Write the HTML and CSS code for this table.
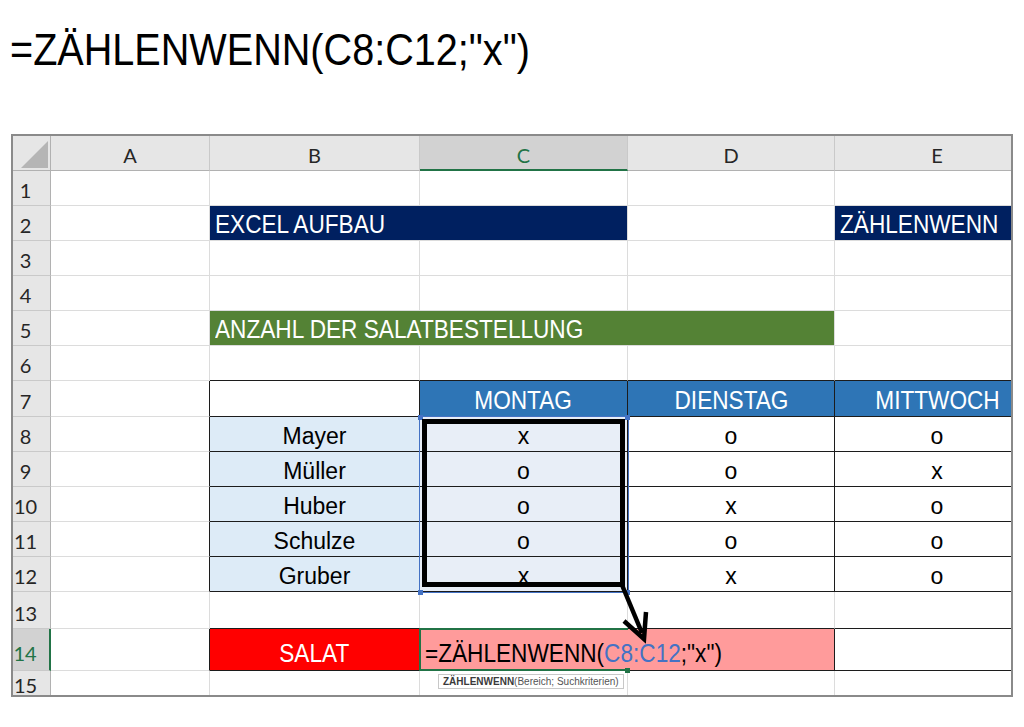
FILE: index.html
```html
<!DOCTYPE html>
<html lang="de">
<head>
<meta charset="utf-8">
<title>ZÄHLENWENN</title>
<link rel="stylesheet" href="styles.css">
</head>
<body>
<h1 class="title"><span>=ZÄHLENWENN(C8:C12;"x")</span></h1>

<div class="sheet">
  <div class="corner"></div>
  <div class="ch">A</div>
  <div class="ch">B</div>
  <div class="ch on">C</div>
  <div class="ch">D</div>
  <div class="ch">E</div>

  <!-- 1 -->
  <div class="rh">1</div><div class="c"></div><div class="c"></div><div class="c"></div><div class="c"></div><div class="c"></div>
  <!-- 2 -->
  <div class="rh">2</div><div class="c"></div>
  <div class="c navy lf span2"><span class="nw">EXCEL AUFBAU</span></div>
  <div class="c"></div>
  <div class="c navy lf"><span class="nw">ZÄHLENWENN</span></div>
  <!-- 3 -->
  <div class="rh">3</div><div class="c"></div><div class="c"></div><div class="c"></div><div class="c"></div><div class="c"></div>
  <!-- 4 -->
  <div class="rh">4</div><div class="c"></div><div class="c"></div><div class="c"></div><div class="c"></div><div class="c"></div>
  <!-- 5 -->
  <div class="rh">5</div><div class="c"></div>
  <div class="c green lf span3"><span class="nw">ANZAHL DER SALATBESTELLUNG</span></div>
  <div class="c"></div>
  <!-- 6 -->
  <div class="rh">6</div><div class="c"></div><div class="c kb"></div><div class="c kb"></div><div class="c kb"></div><div class="c kb"></div>
  <!-- 7 -->
  <div class="rh">7</div><div class="c kr"></div>
  <div class="c k"></div>
  <div class="c k blue ctr"><span class="nw">MONTAG</span></div>
  <div class="c k blue ctr"><span class="nw">DIENSTAG</span></div>
  <div class="c k blue ctr"><span class="nw">MITTWOCH</span></div>
  <!-- 8 -->
  <div class="rh">8</div><div class="c kr"></div>
  <div class="c k name ctr">Mayer</div><div class="c k sel ctr">x</div><div class="c k ctr">o</div><div class="c k ctr">o</div>
  <!-- 9 -->
  <div class="rh">9</div><div class="c kr"></div>
  <div class="c k name ctr">Müller</div><div class="c k sel ctr">o</div><div class="c k ctr">o</div><div class="c k ctr">x</div>
  <!-- 10 -->
  <div class="rh">10</div><div class="c kr"></div>
  <div class="c k name ctr">Huber</div><div class="c k sel ctr">o</div><div class="c k ctr">x</div><div class="c k ctr">o</div>
  <!-- 11 -->
  <div class="rh">11</div><div class="c kr"></div>
  <div class="c k name ctr">Schulze</div><div class="c k sel ctr">o</div><div class="c k ctr">o</div><div class="c k ctr">o</div>
  <!-- 12 -->
  <div class="rh">12</div><div class="c kr"></div>
  <div class="c k name ctr">Gruber</div><div class="c k sel ctr">x</div><div class="c k ctr">x</div><div class="c k ctr">o</div>
  <!-- 13 -->
  <div class="rh">13</div><div class="c"></div><div class="c kb"></div><div class="c kb"></div><div class="c kb"></div><div class="c kb"></div>
  <!-- 14 -->
  <div class="rh on">14</div><div class="c kr"></div>
  <div class="c k red ctr low"><span class="nw">SALAT</span></div>
  <div class="c k pink lf low span2"><span class="nw">=ZÄHLENWENN(<span class="ref">C8:C12</span>;"x")</span></div>
  <div class="c kb"></div>
  <!-- 15 -->
  <div class="rh">15</div><div class="c"></div><div class="c"></div><div class="c"></div><div class="c"></div><div class="c"></div>

  <!-- selection of the referenced range -->
  <div class="selbox"></div>
  <div class="hd" style="left:405px;top:279px"></div>
  <div class="hd" style="left:612px;top:279px"></div>
  <div class="hd" style="left:405px;top:454px"></div>
  <div class="hd" style="left:612px;top:454px"></div>

  <div class="mark"></div>
  <div class="active"></div>
  <div class="fill"></div>

  <svg class="arrow" width="998" height="559" viewBox="0 0 998 559">
    <line x1="609" y1="449" x2="629" y2="497" stroke="#000" stroke-width="4.5"/>
    <polyline points="611,485 631,503 633,476" fill="none" stroke="#000" stroke-width="4.5" stroke-linejoin="miter"/>
  </svg>

  <div class="tip"><b>ZÄHLENWENN</b>(Bereich; Suchkriterien)</div>
</div>
</body>
</html>
```

FILE: styles.css
```css
body {
  margin: 0;
  background: #fff;
  font-family: "Liberation Sans", Arial, sans-serif;
  color: #000;
}

.title {
  margin: 28px 0 0 10px;
  font-size: 44px;
  line-height: 44px;
  font-weight: normal;
}
.title span {
  display: inline-block;
  transform: scaleX(.9);
  transform-origin: left center;
  white-space: nowrap;
}

.sheet {
  position: relative;
  margin: 62px 0 0 11px;
  width: 998px;
  height: 559px;
  border: 2px solid #8a8a8a;
  overflow: hidden;
  display: grid;
  grid-template-columns: 38px 159px 210px 208px 207px 205px;
  grid-template-rows: 35px repeat(6, 35px) 36px repeat(5, 35px) 37px 42px 30px;
}

/* headers */
.corner {
  position: relative;
  background: #e6e6e6;
  border-right: 1px solid #b1b1b1;
  border-bottom: 1px solid #b1b1b1;
}
.corner::after {
  content: "";
  position: absolute;
  left: 8px;
  top: 5px;
  width: 27px;
  height: 27px;
  background: #b5b5b5;
  clip-path: polygon(100% 0, 100% 100%, 0 100%);
}
.ch, .rh {
  box-sizing: border-box;
  display: flex;
  justify-content: center;
  align-items: flex-end;
  background: #e6e6e6;
  font-family: Lato, "Open Sans", sans-serif;
  font-size: 20px;
  line-height: 1;
  color: #262626;
}
.ch {
  border-right: 1px solid #c9c9c9;
  border-bottom: 1px solid #b1b1b1;
  padding-bottom: 5px;
}
.rh {
  border-right: 1px solid #b1b1b1;
  border-bottom: 1px solid #c9c9c9;
  padding: 0 12px 5px 0;
}
.ch.on {
  background: #d2d2d2;
  color: #217346;
  border-bottom: 2px solid #217346;
  padding-bottom: 4px;
}
.rh.on {
  background: #d2d2d2;
  color: #217346;
  border-right: 2px solid #217346;
  padding-bottom: 7px;
}

/* cells */
.c {
  box-sizing: border-box;
  display: flex;
  align-items: flex-end;
  padding-bottom: 3px;
  border-right: 1px solid #dcdcdc;
  border-bottom: 1px solid #dcdcdc;
  font-size: 23px;
  line-height: 1;
  white-space: nowrap;
}
.c.low { padding-bottom: 4px; }
.ctr { justify-content: center; }
.lf { padding-left: 5px; }
.span2 { grid-column: span 2; }
.span3 { grid-column: span 3; }

.k { border-right-color: #1c1c1c; border-bottom-color: #1c1c1c; }
.kb { border-bottom-color: #1c1c1c; }
.kr { border-right-color: #1c1c1c; }

.nw {
  display: inline-block;
  font-size: 26px;
  line-height: 1;
  transform: scaleX(.87);
  transform-origin: left bottom;
}
.ctr .nw { transform-origin: center bottom; }

.navy { background: #002060; color: #fff; }
.green { background: #548235; color: #fff; }
.blue { background: #2e75b6; color: #fff; }
.name { background: #ddebf7; }
.sel { background: #e8eef7; }
.red { background: #ff0000; color: #fff; }
.pink { background: #ff9b9b; }
.ref { color: #4472c4; }

/* overlays */
.selbox {
  position: absolute;
  left: 406px;
  top: 280px;
  width: 210px;
  height: 177px;
  box-sizing: border-box;
  border: 1px solid #4472c4;
}
.hd {
  position: absolute;
  width: 5px;
  height: 5px;
  background: #4472c4;
}
.mark {
  position: absolute;
  left: 409px;
  top: 283px;
  width: 203px;
  height: 168px;
  box-sizing: border-box;
  border: 5px solid #000;
}
.active {
  position: absolute;
  left: 406px;
  top: 492px;
  width: 209px;
  height: 43px;
  box-sizing: border-box;
  border: 2px solid #217346;
  border-right: 0;
}
.fill {
  position: absolute;
  left: 612px;
  top: 532px;
  width: 5px;
  height: 5px;
  background: #217346;
}
.arrow {
  position: absolute;
  left: 0;
  top: 0;
}
.tip {
  position: absolute;
  left: 425px;
  top: 538px;
  height: 15px;
  box-sizing: border-box;
  padding: 0 4px;
  border: 1px solid #c8c8c8;
  background: #fff;
  font-size: 10px;
  line-height: 13px;
  color: #555;
  white-space: nowrap;
}
.tip b { color: #3a3a3a; }
```
